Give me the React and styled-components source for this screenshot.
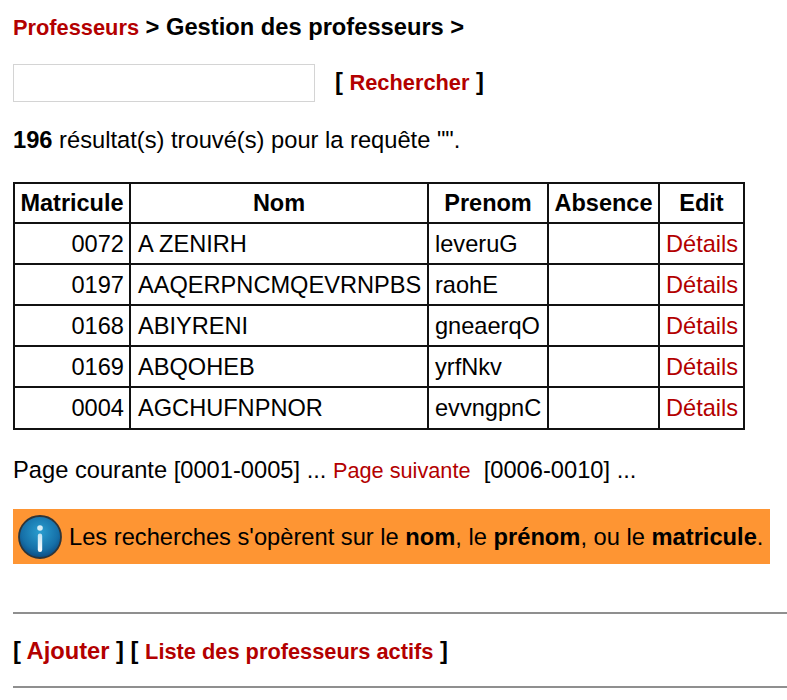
import React from 'react'
import styled, { createGlobalStyle } from 'styled-components'

const GlobalStyle = createGlobalStyle`
    html, body {
        margin: 0;
        padding: 0;
        background: #fff;
    }
    body {
        font-family: "Liberation Sans", Arial, sans-serif;
        font-size: 23.7px;
        color: #000;
    }
`

const Page = styled.div`
    width: 787px;
    height: 700px;
    overflow: hidden;
    padding: 13px 0 0 13px;
    box-sizing: border-box;
`

const Breadcrumb = styled.div`
    font-weight: 700;
    line-height: 28px;
`

const RedLink = styled.a`
    color: #b30000;
    font-weight: ${props => props.$plain ? 400 : 700};
    font-size: ${props => props.$size || 'inherit'};
`

const SearchRow = styled.div`
    display: flex;
    align-items: center;
    gap: 20px;
    margin-top: 22px;
`

const SearchInput = styled.input`
    width: 302px;
    height: 38px;
    box-sizing: border-box;
    border: 1.5px solid #d4d4d4;
    background: #fff;
    padding: 0;
`

const Bracket = styled.span`
    font-weight: 700;
`

const SearchLabel = styled(Bracket)`
    padding-bottom: 2px;
`

const ResultCount = styled.p`
    margin: 24px 0 0;
    line-height: 28px;
`

const ResultTable = styled.table`
    border-collapse: collapse;
    table-layout: fixed;
    width: 730px;
    margin-top: 28px;

    tbody tr:last-child td {
        height: 42px;
    }
`

const HeadCell = styled.th`
    border: 2px solid #111;
    height: 40px;
    box-sizing: border-box;
    padding: 1px 0 0;
    font-size: 23.5px;
    font-weight: 700;
    text-align: center;
    width: ${props => props.$width}px;
`

const Cell = styled.td`
    border: 2px solid #111;
    height: 41px;
    padding: 1px 5px 0 ${props => props.$left || 6}px;
    box-sizing: border-box;
    font-size: 23.6px;
    white-space: nowrap;
    text-align: ${props => props.$align || 'left'};
`

const Pager = styled.p`
    margin: 26px 0 0;
    line-height: 28px;
`

const Notice = styled.div`
    display: flex;
    align-items: center;
    gap: 7px;
    width: 757px;
    height: 55px;
    margin-top: 24px;
    padding-left: 5px;
    box-sizing: border-box;
    background: #fe9533;
    white-space: nowrap;
`

const NoticeText = styled.span`
    padding-top: 2px;
`

const Rule = styled.hr`
    margin: ${props => props.$top}px 0 0 0;
    border: 0;
    border-top: 2px solid #8f8f8f;
    width: 774px;
`

const BottomLinks = styled.div`
    margin-top: 23px;
    line-height: 28px;
`

const InfoIcon = () => (
    <svg width="44" height="44" viewBox="0 0 44 44">
        <defs>
            <radialGradient id="infoBg" cx="50%" cy="38%" r="62%">
                <stop offset="0%" stopColor="#2a9ed0" />
                <stop offset="70%" stopColor="#1670a8" />
                <stop offset="100%" stopColor="#0c4a80" />
            </radialGradient>
            <linearGradient id="infoBar" x1="0" y1="0" x2="0" y2="1">
                <stop offset="0%" stopColor="#bfe2f2" />
                <stop offset="100%" stopColor="#ffffff" />
            </linearGradient>
        </defs>
        <circle cx="22" cy="22" r="21" fill="url(#infoBg)" stroke="#2f3538" strokeWidth="1.8" />
        <circle cx="22" cy="13" r="2.8" fill="#d5ecf6" />
        <rect x="19.8" y="18.5" width="4.4" height="18.5" rx="2.2" fill="url(#infoBar)" />
    </svg>
)

const rows = [
    ['0072', 'A ZENIRH', 'leveruG'],
    ['0197', 'AAQERPNCMQEVRNPBS', 'raohE'],
    ['0168', 'ABIYRENI', 'gneaerqO'],
    ['0169', 'ABQOHEB', 'yrfNkv'],
    ['0004', 'AGCHUFNPNOR', 'evvngpnC'],
]

const App = () => {
    return (
        <Page>
            <GlobalStyle />
            <Breadcrumb>
                <RedLink $size="21.8px">Professeurs</RedLink> &gt; Gestion des professeurs &gt;
            </Breadcrumb>
            <SearchRow>
                <SearchInput />
                <SearchLabel>[ <RedLink $size="21.8px">Rechercher</RedLink> ]</SearchLabel>
            </SearchRow>
            <ResultCount><b>196</b> résultat(s) trouvé(s) pour la requête "".</ResultCount>
            <ResultTable>
                <thead>
                    <tr>
                        <HeadCell $width={116}>Matricule</HeadCell>
                        <HeadCell $width={298}>Nom</HeadCell>
                        <HeadCell $width={120}>Prenom</HeadCell>
                        <HeadCell $width={111}>Absence</HeadCell>
                        <HeadCell $width={85}>Edit</HeadCell>
                    </tr>
                </thead>
                <tbody>
                    {rows.map(row => (
                        <tr key={row[0]}>
                            <Cell $align="right">{row[0]}</Cell>
                            <Cell $left={7}>{row[1]}</Cell>
                            <Cell>{row[2]}</Cell>
                            <Cell />
                            <Cell><RedLink $plain>Détails</RedLink></Cell>
                        </tr>
                    ))}
                </tbody>
            </ResultTable>
            <Pager>
                Page courante [0001-0005] ... <RedLink $plain $size="21.7px">Page suivante</RedLink>&nbsp; [0006-0010] ...
            </Pager>
            <Notice>
                <InfoIcon />
                <NoticeText>Les recherches s'opèrent sur le <b>nom</b>, le <b>prénom</b>, ou le <b>matricule</b>.</NoticeText>
            </Notice>
            <Rule $top={48} />
            <BottomLinks>
                <Bracket>[ <RedLink>Ajouter</RedLink> ]</Bracket>{' '}
                <Bracket>[ <RedLink $size="21.8px">Liste des professeurs actifs</RedLink> ]</Bracket>
            </BottomLinks>
            <Rule $top={20} />
        </Page>
    )
}

export default App
